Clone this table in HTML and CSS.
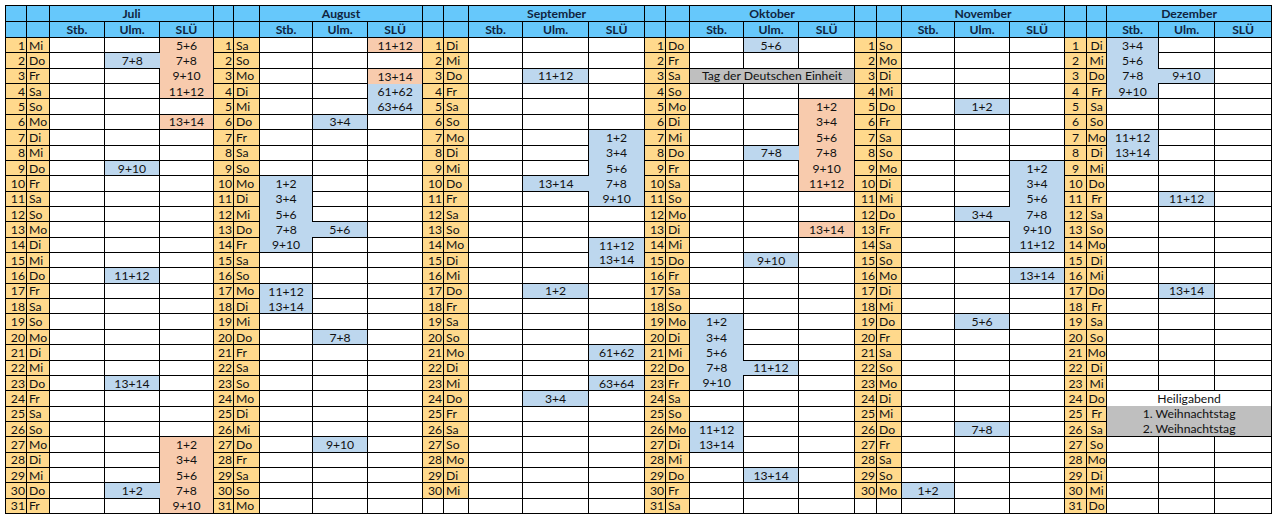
FILE: index.html
```html
<!DOCTYPE html>
<html lang="de">
<head>
<meta charset="utf-8">
<title>Kalender</title>
<link rel="stylesheet" href="styles.css">
</head>
<body>
<table class="cal" id="cal"></table>
<script src="script.js"></script>
</body>
</html>
```

FILE: styles.css
```css
html, body {
  margin: 0;
  padding: 0;
  background: #ffffff;
}

.cal {
  margin: 5px 0 0 5px;
  border-collapse: collapse;
  table-layout: fixed;
  width: 1266px;
  border: 1px solid #000;
  font-family: Lato, "Liberation Sans", sans-serif;
  font-size: 12.2px;
  color: #111;
}

.cal td {
  border: 1px solid #000;
  padding: 0;
  white-space: nowrap;
  overflow: hidden;
  text-align: center;
  vertical-align: middle;
  line-height: 13px;
}

.cal tr.hr { height: 16px; }
.cal tr.dr { height: 15.37px; }

.cal tr.hr td {
  background: #66c8fb;
  font-weight: 700;
  color: #0f2440;
}

.cal td.n {
  background: #ffd98c;
  text-align: right;
  padding-right: 1px;
}

.cal td.w {
  background: #ffd98c;
  text-align: left;
  padding-left: 2px;
}

.cal td.n.c,
.cal td.w.c {
  text-align: center;
  padding: 0;
}

.cal td.b {
  background: #bdd7ee;
  border-style: none;
}

.cal td.s {
  background: #f8cbad;
  border-style: none;
}

.cal td.g {
  background: #bfbfbf;
  border-style: none;
}

.cal td.hb {
  border-bottom-style: none;
}

col.w20 { width: 20px; }
col.w21 { width: 21px; }
col.w22 { width: 22px; }
col.w23 { width: 23px; }
col.w24 { width: 24px; }
col.w25 { width: 25px; }
col.w26 { width: 26px; }
col.w52 { width: 52px; }
col.w53 { width: 53px; }
col.w54 { width: 54px; }
col.w55 { width: 55px; }
col.w56 { width: 56px; }
col.w57 { width: 57px; }
col.w66 { width: 66px; }
```

FILE: script.js
```js
(function () {
  var WD = ['Mo', 'Di', 'Mi', 'Do', 'Fr', 'Sa', 'So'];
  var M = [
    { n: 'Juli', s: 2, d: 31, w: [21, 23, 55, 55, 54], c: '', r: [
      '1 - - s5+6', '2 - b7+8 s7+8', '3 - - s9+10', '4 - - s11+12', '6 - - s13+14',
      '9 - b9+10 -', '16 - b11+12 -', '23 - b13+14 -', '27 - - s1+2', '28 - - s3+4',
      '29 - - s5+6', '30 - b1+2 s7+8', '31 - - s9+10'] },
    { n: 'August', s: 5, d: 31, w: [20, 26, 53, 55, 55], c: '', r: [
      '1 - - s11+12', '3 - - s13+14', '4 - - b61+62', '5 - - b63+64', '6 - b3+4 -',
      '10 b1+2 - -', '11 b3+4 - -', '12 b5+6 - -', '13 b7+8 b5+6 -', '14 b9+10 - -',
      '17 b11+12 - -', '18 b13+14 - -', '20 - b7+8 -', '27 - b9+10 -'] },
    { n: 'September', s: 1, d: 30, w: [21, 25, 54, 66, 56], c: '', r: [
      '3 - b11+12 -', '7 - - b1+2', '8 - - b3+4', '9 - - b5+6', '10 - b13+14 b7+8',
      '11 - - b9+10', '14 - - b11+12', '15 - - b13+14', '17 - b1+2 -', '21 - - b61+62',
      '23 - - b63+64', '24 - b3+4 -'] },
    { n: 'Oktober', s: 3, d: 31, w: [21, 24, 54, 55, 56], c: '', r: [
      '1 - b5+6 -', '3 g:Tag der Deutschen Einheit', '5 - - s1+2', '6 - - s3+4', '7 - - s5+6',
      '8 - b7+8 s7+8', '9 - - s9+10', '10 - - s11+12', '13 - - s13+14', '15 - b9+10 -',
      '19 b1+2 - -', '20 b3+4 - -', '21 b5+6 - -', '22 b7+8 b11+12 -', '23 b9+10 - -',
      '26 b11+12 - -', '27 b13+14 - -', '29 - b13+14 -'] },
    { n: 'November', s: 6, d: 30, w: [22, 25, 53, 55, 55], c: '', r: [
      '5 - b1+2 -', '9 - - b1+2', '10 - - b3+4', '11 - - b5+6', '12 - b3+4 b7+8',
      '13 - - b9+10', '14 - - b11+12', '16 - - b13+14', '19 - b5+6 -', '26 - b7+8 -',
      '30 b1+2 - -'] },
    { n: 'Dezember', s: 1, d: 31, w: [22, 20, 52, 56, 57], c: ' c', r: [
      '1 b3+4 - -', '2 b5+6 - -', '3 b7+8 b9+10 -', '4 b9+10 - -', '7 b11+12 - -',
      '8 b13+14 - -', '11 - b11+12 -', '17 - b13+14 -', '24 w:Heiligabend',
      '25 g:1. Weihnachtstag', '26 g:2. Weihnachtstag'] }
  ];

  var table = document.getElementById('cal');

  var cg = document.createElement('colgroup');
  M.forEach(function (m) {
    m.w.forEach(function (w) {
      var col = document.createElement('col');
      col.className = 'w' + w;
      cg.appendChild(col);
    });
  });
  table.appendChild(cg);

  function td(tr, cls, txt, span) {
    var c = document.createElement('td');
    if (cls) c.className = cls;
    if (txt) c.textContent = txt;
    if (span) c.colSpan = span;
    tr.appendChild(c);
    return c;
  }

  var tb = document.createElement('tbody');
  var r1 = document.createElement('tr');
  r1.className = 'hr';
  var r2 = document.createElement('tr');
  r2.className = 'hr';
  M.forEach(function (m) {
    td(r1); td(r1); td(r1, 'mn', m.n, 3);
    td(r2); td(r2); td(r2, '', 'Stb.'); td(r2, '', 'Ulm.'); td(r2, '', 'SLÜ');
  });
  tb.appendChild(r1);
  tb.appendChild(r2);

  M.forEach(function (m) {
    m.map = {};
    m.r.forEach(function (line) {
      var i = line.indexOf(' ');
      var day = +line.slice(0, i);
      var rest = line.slice(i + 1);
      if (rest.indexOf(':') === 1) {
        m.map[day] = { merge: rest.charAt(0), text: rest.slice(2) };
      } else {
        m.map[day] = { cells: rest.split(' ') };
      }
    });
  });

  for (var d = 1; d <= 31; d++) {
    var tr = document.createElement('tr');
    tr.className = 'dr';
    M.forEach(function (m) {
      if (d > m.d) {
        td(tr); td(tr); td(tr); td(tr); td(tr);
        return;
      }
      td(tr, 'n' + m.c, String(d));
      td(tr, 'w' + m.c, WD[(m.s + d - 1) % 7]);
      var e = m.map[d];
      if (e && e.merge) {
        td(tr, e.merge === 'g' ? 'g' : 'hb', e.text, 3);
        return;
      }
      for (var k = 0; k < 3; k++) {
        var v = e ? e.cells[k] : '-';
        if (v === '-') td(tr);
        else td(tr, v.charAt(0), v.slice(1));
      }
    });
    tb.appendChild(tr);
  }
  table.appendChild(tb);
})();
```
